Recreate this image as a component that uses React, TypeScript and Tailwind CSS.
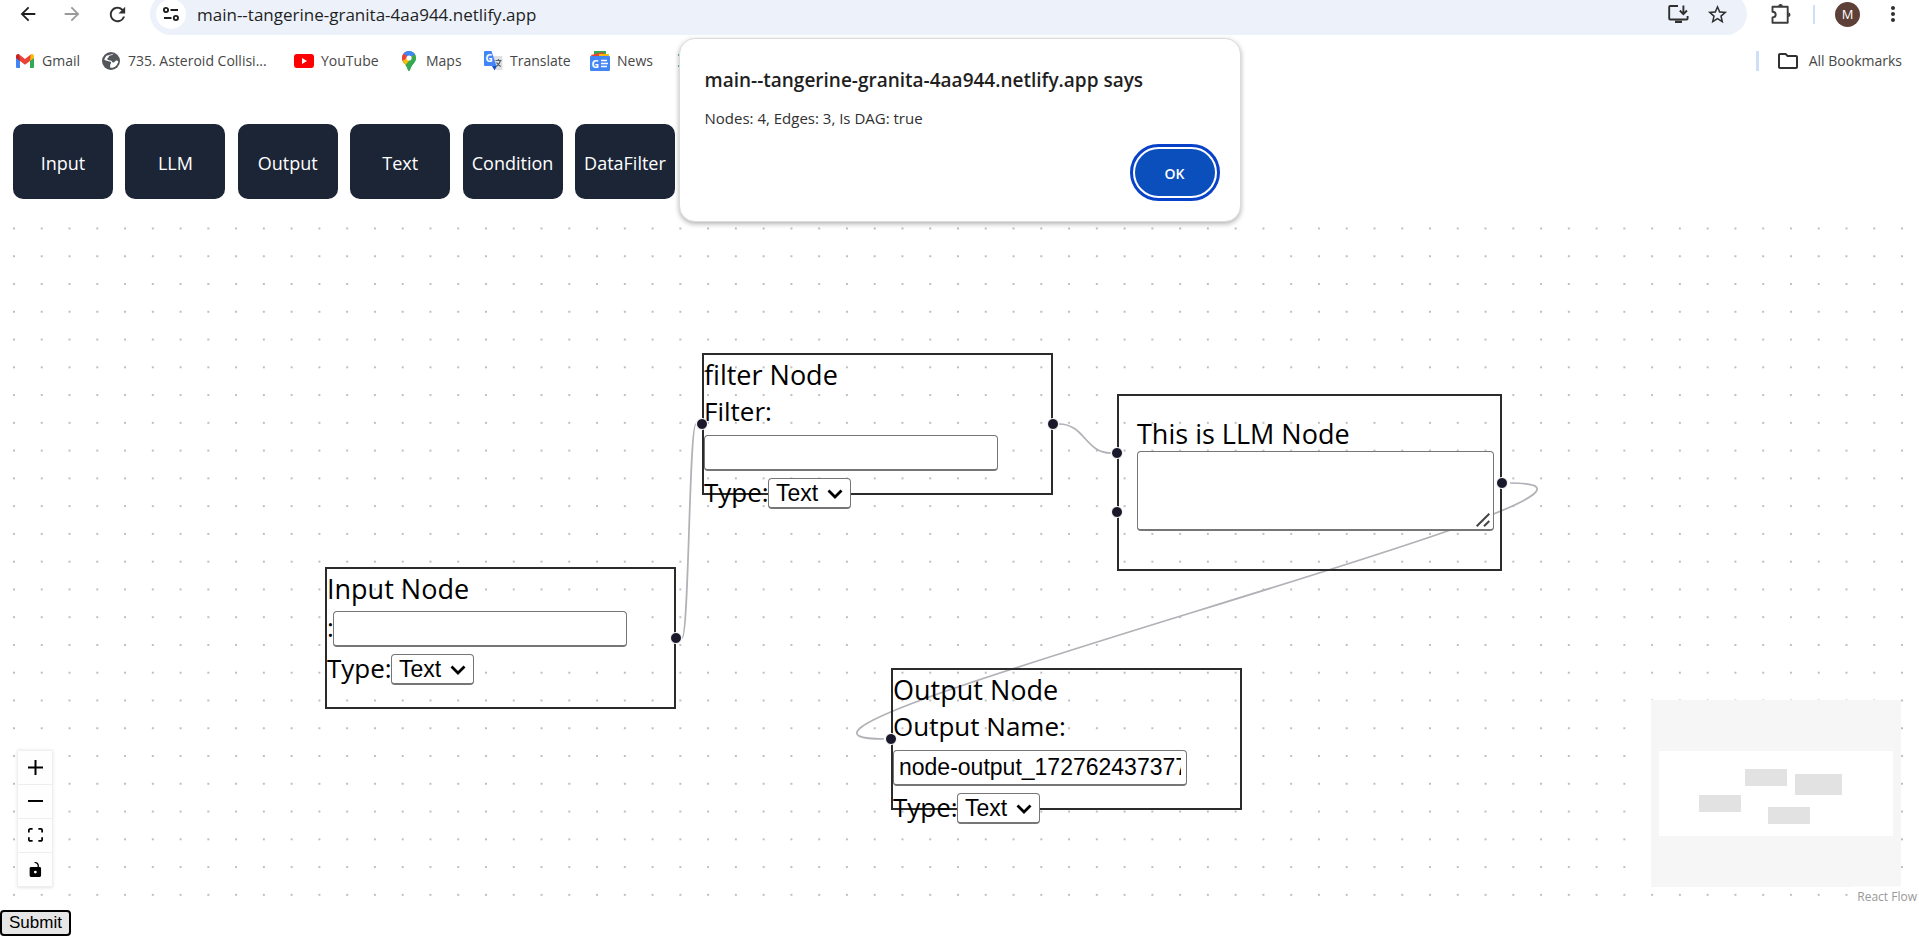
import type { ReactNode } from "react";
import { MdArrowBack, MdArrowForward, MdMoreVert, MdOutlineFolder, MdRefresh, MdStarBorder } from "react-icons/md";

const TuneIcon = () => (
  <svg width="18" height="18" viewBox="0 0 18 18" fill="none" stroke="#1f1f1f" strokeWidth="1.9">
    <circle cx="4" cy="5" r="2.1" />
    <path d="M8.5 5H16M2 13h7.5" />
    <circle cx="13.9" cy="13" r="2.1" />
  </svg>
);

const InstallIcon = () => (
  <svg width="22" height="22" viewBox="0 0 22 22" fill="none" stroke="#303030" strokeWidth="1.9">
    <path d="M11 3H3.2a1 1 0 0 0-1 1v11.5a1 1 0 0 0 1 1h16.4a1 1 0 0 0 1-1V13" />
    <path d="M16.4 2.5v8M12.8 7.5l3.6 3.6 3.6-3.6" />
    <path d="M8 18.8h7" strokeWidth="2.4" />
  </svg>
);

const PuzzleIcon = () => (
  <svg width="22" height="22" viewBox="0 0 22 22" fill="none" stroke="#3c3c3c" strokeWidth="1.9" strokeLinejoin="round">
    <path d="M2.5 3.7h15.2v16H2.5v-5.2c2 0 3.200-1.200 3.200-2.900S4.500 8.700 2.500 8.700z" />
    <path d="M8.200 3.200a2.300 2.300 0 0 1 4.600 0zM18.200 9.400a2.300 2.300 0 0 1 0 4.600z" fill="#3c3c3c" stroke="none" />
  </svg>
);

const GmailIcon = () => (
  <svg width="20" height="20" viewBox="0 0 20 20">
    <path d="M1 5.500V16a1 1 0 0 0 1 1h3V9z" fill="#4285f4" />
    <path d="M19 5.500V16a1 1 0 0 1-1 1h-3V9z" fill="#34a853" />
    <path d="M15 5v5l4-3V5.200c0-1.900-2-2.700-3.300-1.700z" fill="#fbbc04" />
    <path d="M1 5.200V7l4 3V5l-.7-1.500C3 2.500 1 3.300 1 5.200z" fill="#c5221f" />
    <path d="M4.300 3.500 10 8l5.700-4.500L15 10l-5 3.800L5 10z" fill="#ea4335" />
  </svg>
);

const GlobeIcon = () => (
  <svg width="20" height="20" viewBox="0 0 20 20">
    <circle cx="10" cy="10" r="9" fill="#53575c" />
    <path d="M12.500 2.800c-1.200 1-1.600 1.500-3.500 1.700C7.500 5 7.800 7 6.200 7.500c0 1.600 1.400 1.800 3.300 1.900 1.600.2 1.300 1.800 2.700 2.100 1.700.3 1.500-1.700 2.900-1.900 1 0 1.600.5 2.200.9-.3 1.900-1.300 3.500-2.700 4.700-2 1.300-3.700 1.700-5.600 1.400.4-1.300-.2-1.900.3-3 .2-1.200 1-1 .9-2.100-.8-.9-2.400-1-3.600-1.400L3.300 9c.4-1.600 1-3 2.200-4.200" fill="#fff" />
    <path d="M3 9.500c1.500.3 3 1 4 2.200.6 1 .1 2.300.5 4.500-2.600-1-4.200-3.300-4.500-6.700z" fill="#53575c" />
  </svg>
);

const YouTubeIcon = () => (
  <svg width="20" height="20" viewBox="0 0 20 20">
    <rect y="3" width="20" height="14" rx="3" fill="#f00" />
    <path d="M8 7v6l5-3z" fill="#fff" />
  </svg>
);

const MapsIcon = () => (
  <svg width="20" height="20" viewBox="0 0 20 20">
    <defs>
      <clipPath id="pin">
        <path d="M10 0a7 7 0 0 0-7 7c0 4.500 4.500 6 6 12.200.3 1 1.700 1 2 0C12.500 13 17 11.500 17 7a7 7 0 0 0-7-7z" />
      </clipPath>
    </defs>
    <g clipPath="url(#pin)">
      <path d="M0 0h20v20H0z" fill="#34a853" />
      <path d="M3 12.500 16 -1h4v3L6.500 17.500z" fill="#fbbc04" />
      <path d="M10 7 20-2v14L9 20l-4-5 9-10z" fill="#34a853" />
      <path d="M0 0h7l3 7-6 6-4-3z" fill="#ea4335" />
      <path d="M3 10.500 7.500 7 10 9.800l-4.500 5.500z" fill="#fbbc04" />
      <path d="M5 0h15v3l-6.500 1.500L10 7 4.500 2.600z" fill="#4285f4" />
      <path d="M4.500 2.600 8 5.500 5 9 2 8z" fill="#ea4335" />
    </g>
    <circle cx="10" cy="7" r="2.600" fill="#fff" />
  </svg>
);

const TranslateIcon = () => (
  <svg width="20" height="20" viewBox="0 0 20 20">
    <path d="M8 5h10.500a1 1 0 0 1 1 1v12a1 1 0 0 1-1 1h-6z" fill="#e0e0e0" />
    <path d="M9 15h5l-2.500 4.500z" fill="#1a4fc4" />
    <path d="M2 0h6.500l5 15H2a1 1 0 0 1-1-1V1a1 1 0 0 1 1-1z" fill="#4285f4" />
    <text x="2.500" y="11" fontSize="10" fontWeight="700" fill="#fff" fontFamily="Open Sans, sans-serif">G</text>
    <path d="M12.500 9.500h6M15.500 8v1.500M17.500 9.500c-.6 2.500-2 4.300-4 5.700M13.500 11.500c1 1.800 2.300 3 4.300 4" stroke="#54606c" strokeWidth="1.200" fill="none" />
  </svg>
);

const NewsIcon = () => (
  <svg width="20" height="20" viewBox="0 0 20 20">
    <path d="M4 0h12v6H4z" fill="#34a853" />
    <path d="m1 4 12-3 2 6H2z" fill="#ea4335" />
    <path d="M9 3h10v5H9z" fill="#fbbc04" />
    <rect y="5" width="20" height="15" rx="1" fill="#4285f4" />
    <text x="1.500" y="16.500" fontSize="10.500" fontWeight="700" fill="#fff" fontFamily="Open Sans, sans-serif">G</text>
    <path d="M11 9.500h6M11 12.500h7M11 15.500h6" stroke="#fff" strokeWidth="1.600" />
  </svg>
);

const bookmarks: { label: string; icon: ReactNode; width: string }[] = [
  { label: "Gmail", icon: <GmailIcon />, width: "w-[86px]" },
  { label: "735. Asteroid Collisi...", icon: <GlobeIcon />, width: "w-[193px]" },
  { label: "YouTube", icon: <YouTubeIcon />, width: "w-[105px]" },
  { label: "Maps", icon: <MapsIcon />, width: "w-[84px]" },
  { label: "Translate", icon: <TranslateIcon />, width: "w-[107px]" },
  { label: "News", icon: <NewsIcon />, width: "w-[88px]" },
];

function BrowserBar() {
  return (
    <header>
      <nav className="flex h-[35px] items-start" aria-label="Browser">
        <div className="flex h-7 w-[150px] items-center pl-[17px] text-[22px]">
          <button aria-label="Back" className="text-[#1f1f1f]"><MdArrowBack /></button>
          <button aria-label="Forward" className="ml-[22px] text-[#9a9a9a]"><MdArrowForward /></button>
          <button aria-label="Reload" className="ml-[23px] text-[23px] text-[#303030]"><MdRefresh /></button>
        </div>
        <div className="-mt-[7px] flex h-[42px] flex-1 items-center rounded-full bg-[#ecf1fa] pl-1.5 pr-[18px]">
          <button aria-label="Site information" className="flex size-[30px] items-center justify-center rounded-full bg-white">
            <TuneIcon />
          </button>
          <input
            aria-label="Address"
            className="ml-[11px] min-w-0 flex-1 bg-transparent pt-0.5 text-[17px] leading-6 text-[#1f1f1f] outline-none"
            defaultValue="main--tangerine-granita-4aa944.netlify.app"
          />
          <button aria-label="Install app"><InstallIcon /></button>
          <button aria-label="Bookmark this page" className="ml-[17px] text-[23px] text-[#303030]"><MdStarBorder /></button>
        </div>
        <div className="flex h-7 w-[172px] items-center pl-[23px]">
          <button aria-label="Extensions"><PuzzleIcon /></button>
          <span className="ml-[21px] h-[19px] w-0.5 bg-[#cfdffa]" />
          <button aria-label="Profile" className="ml-5 flex size-[25px] items-center justify-center rounded-full bg-[#5d4037] text-[13px] leading-4 text-white">M</button>
          <button aria-label="Menu" className="ml-[21px] text-[24px] text-[#303030]"><MdMoreVert /></button>
        </div>
      </nav>
      <nav className="flex h-[52px] items-center justify-between pl-[15px] pr-[17px] text-[14px] leading-5 text-[#474747]" aria-label="Bookmarks">
        <div className="flex">
          {bookmarks.map((b) => (
            <a key={b.label} href="#" className={`flex items-center gap-[7px] whitespace-nowrap ${b.width}`}>
              {b.icon}
              {b.label}
            </a>
          ))}
          <a href="#" aria-label="Sheets" className="flex items-center">
            <svg width="20" height="20" viewBox="0 0 20 20">
              <path d="M1 3v2M1 14v2" fill="none" stroke="#34a853" strokeWidth="1.500" />
            </svg>
          </a>
        </div>
        <div className="flex items-center">
          <span className="h-5 w-[3px] bg-[#cfdffa]" />
          <a href="#" className="ml-[17px] flex items-center gap-[9px]">
            <MdOutlineFolder className="text-[24px] text-[#303030]" />
            All Bookmarks
          </a>
        </div>
      </nav>
    </header>
  );
}

function Handle({ className }: { className: string }) {
  return <span className={`absolute size-3 rounded-full border border-white bg-[#1a192b] ${className}`} />;
}

function TypeSelect({ id }: { id: string }) {
  return (
    <div className="mt-[7px] flex h-[31px]">
      <label htmlFor={id} className="w-[64px] leading-[28px]">Type:</label>
      <div className="relative">
        <select
          id={id}
          className="block h-[31px] w-[83px] appearance-none rounded border border-b-2 border-[#767676] bg-white pl-[7px] font-['Liberation_Sans',Arial,sans-serif] text-[23px] leading-[27px]"
        >
          <option>Text</option>
          <option>Number</option>
        </select>
        <svg className="pointer-events-none absolute right-2 top-2.5" width="16" height="12" viewBox="0 0 16 12">
          <path d="M1.500 2.500 8 9l6.500-6.500" fill="none" stroke="#000" strokeWidth="2.800" />
        </svg>
      </div>
    </div>
  );
}

const fieldClass =
  "h-9 w-[294px] rounded border border-b-2 border-[#767676] bg-white px-[5px] font-['Liberation_Sans',Arial,sans-serif] text-[23px] leading-7";

function FieldNode({ id, place, title, label, value, inline, target, source }: {
  id: string; place: string; title: string; label: string; value?: string; inline?: boolean; target?: boolean; source?: boolean;
}) {
  return (
    <section className={`absolute h-[142px] w-[351px] border-2 border-[#2b2b2b] text-[26px] ${place}`}>
      <h2 className="h-[37px] text-[27px] leading-[39px]">{title}</h2>
      <div className={inline ? "flex pt-[5px]" : ""}>
        <label htmlFor={`${id}-name`} className={inline ? "w-1.5 leading-8" : "block h-[43px] leading-[39px]"}>{label}</label>
        <input id={`${id}-name`} type="text" defaultValue={value} className={`block ${fieldClass}`} />
      </div>
      <TypeSelect id={`${id}-type`} />
      {target && <Handle className="-left-2 top-[63px]" />}
      {source && <Handle className="-right-2 top-[63px]" />}
    </section>
  );
}

function Canvas() {
  return (
    <main className="relative min-h-[694px] flex-1 overflow-hidden">
      <svg className="absolute inset-0 size-full" aria-hidden="true">
        <defs>
          <pattern id="dots" x="0.12" y="3.6" width="27.765" height="27.765" patternUnits="userSpaceOnUse">
            <circle cx="13.880" cy="13.880" r="0.950" fill="#a5a5aa" />
          </pattern>
        </defs>
        <rect width="100%" height="100%" fill="url(#dots)" />
        <g fill="none" stroke="#b1b1b7" strokeWidth="1.735">
          <path d="M682 427C689 427 689 213 696 213" />
          <path d="M1059 213C1085 213 1085 242 1111 242" />
          <path d="M1510 272C1716 272 678 528 884 528" />
        </g>
      </svg>

      <FieldNode id="input" place="left-[325px] top-[356px]" title="Input Node" label=":" inline source />
      <FieldNode id="filter" place="left-[702px] top-[142px]" title="filter Node" label="Filter:" target source />
      <FieldNode id="output" place="left-[891px] top-[457px]" title="Output Node" label="Output Name:" value="node-output_1727624373775" target />
      <section className="absolute left-[1117px] top-[183px] h-[177px] w-[385px] border-2 border-[#2b2b2b] pl-[18px] pt-[18px]">
        <label htmlFor="llm-text" className="block h-[37px] text-[27px] leading-[39px]">This is LLM Node</label>
        <div className="relative w-[357px]">
          <textarea id="llm-text" className="block h-20 w-full resize-none rounded border border-b-2 border-[#767676] bg-white" />
          <svg className="pointer-events-none absolute bottom-1 right-1" width="14" height="14" viewBox="0 0 14 14">
            <path d="M.7 13.300 13.300.7M8 13.300 13.300 8" stroke="#444" strokeWidth="2" />
          </svg>
        </div>
        <Handle className="-left-2 top-[51px]" />
        <Handle className="-left-2 top-[110px]" />
        <Handle className="-right-2 top-[81px]" />
      </section>

      <div className="absolute bottom-[18px] left-[18px] flex w-[34px] flex-col shadow-[0_0_3px_1px_rgba(0,0,0,0.1)]">
        <ControlButton label="Zoom in" box="0 0 32 32" d="M32 18.133H18.133V32h-4.266V18.133H0v-4.266h13.867V0h4.266v13.867H32z" />
        <ControlButton label="Zoom out" box="0 0 32 5" d="M0 0h32v4.200H0z" />
        <ControlButton label="Fit view" box="0 0 32 30" d="M3.692 4.630c0-.53.4-.938.939-.938h5.215V0H4.708C2.130 0 0 2.054 0 4.630v5.216h3.692V4.631zM27.354 0h-5.200v3.692h5.170c.53 0 .984.4.984.939v5.215H32V4.631A4.624 4.624 0 0027.354 0zm.954 24.830c0 .532-.4.940-.939.940h-5.215v3.768h5.215c2.577 0 4.631-2.130 4.631-4.707v-5.139h-3.692v5.139zm-23.677.940c-.531 0-.939-.4-.939-.940v-5.138H0v5.139c0 2.577 2.130 4.707 4.708 4.707h5.138V25.770H4.631z" />
        <ControlButton label="Toggle interactivity" box="0 0 25 32" d="M21.333 10.667H19.810V7.619C19.810 3.429 16.380 0 12.190 0c-4.114 1.828-1.370 2.133.305 2.438 1.676.305 4.420 2.590 4.420 5.181v3.048H3.047A3.056 3.056 0 000 13.714v15.238A3.056 3.056 0 003.048 32h18.285a3.056 3.056 0 003.048-3.048V13.714a3.056 3.056 0 00-3.048-3.047zM12.190 24.533a3.056 3.056 0 01-3.047-3.047 3.056 3.056 0 013.047-3.048 3.056 3.056 0 013.048 3.048 3.056 3.056 0 01-3.048 3.047z" />
      </div>

      <svg className="absolute bottom-[18px] right-[18px]" width="250" height="187" viewBox="0 0 250 187" role="img" aria-label="Mini map">
        <path d="M0 0h250v187H0z" fill="#f6f6f6" />
        <path d="M8 51h234v85H8z" fill="#fff" />
        <path d="M48 95h42v17H48zM94 69h42v17H94zM144 74h47v21h-47zM117 107h42v17h-42z" fill="#e2e2e2" />
      </svg>
      <a href="#" className="absolute bottom-0 right-0 bg-white/50 pl-1 pr-0.5 pt-0.5 text-[12px] leading-[17px] text-[#999]">React Flow</a>
    </main>
  );
}

function ControlButton({ label, box, d }: { label: string; box: string; d: string }) {
  return (
    <button aria-label={label} className="flex h-[34px] items-center justify-center border-b border-[#eee] bg-[#fefefe]">
      <svg viewBox={box} className="max-h-[15px] w-[15px]"><path d={d} /></svg>
    </button>
  );
}

const palette = ["Input", "LLM", "Output", "Text", "Condition", "DataFilter"];

export default function App() {
  return (
    <div className="relative flex min-h-screen flex-col bg-white font-['Open_Sans',sans-serif] text-black">
      <BrowserBar />
      <div className="flex w-[675px] justify-between pb-3 pl-[13px] pt-[37px]">
        {palette.map((name) => (
          <button key={name} className="h-[75px] w-[100px] rounded-[10px] bg-[#1c2536] pt-0.5 text-[18px] leading-6 text-white">{name}</button>
        ))}
      </div>
      <Canvas />
      <div className="pb-3.5 pt-[5px]">
        <button className="block h-[26px] w-[71px] rounded border-2 border-black bg-[#e6e6e6] font-['Liberation_Sans',Arial,sans-serif] text-[17px] leading-5">Submit</button>
      </div>

      <div role="alertdialog" aria-labelledby="alert-title" className="absolute left-1/2 top-[38px] flex h-[184px] w-[562px] -translate-x-1/2 flex-col rounded-2xl border border-[#dcdcdc] bg-white px-[25px] pt-[27px] shadow-[0_2px_5px_rgba(0,0,0,0.3)]">
        <h1 id="alert-title" className="text-[19px] font-semibold leading-[28px] text-[#1f1f1f]">main--tangerine-granita-4aa944.netlify.app says</h1>
        <p className="mt-[13px] text-[15px] leading-[22px] text-[#303030]">Nodes: 4, Edges: 3, Is DAG: true</p>
        <button className="mt-5 h-[47px] w-20 self-end rounded-full bg-[#0b4fbc] pt-px text-[14px] font-semibold text-white outline-3 outline-offset-2 outline-[#0842c8]">OK</button>
      </div>
    </div>
  );
}
